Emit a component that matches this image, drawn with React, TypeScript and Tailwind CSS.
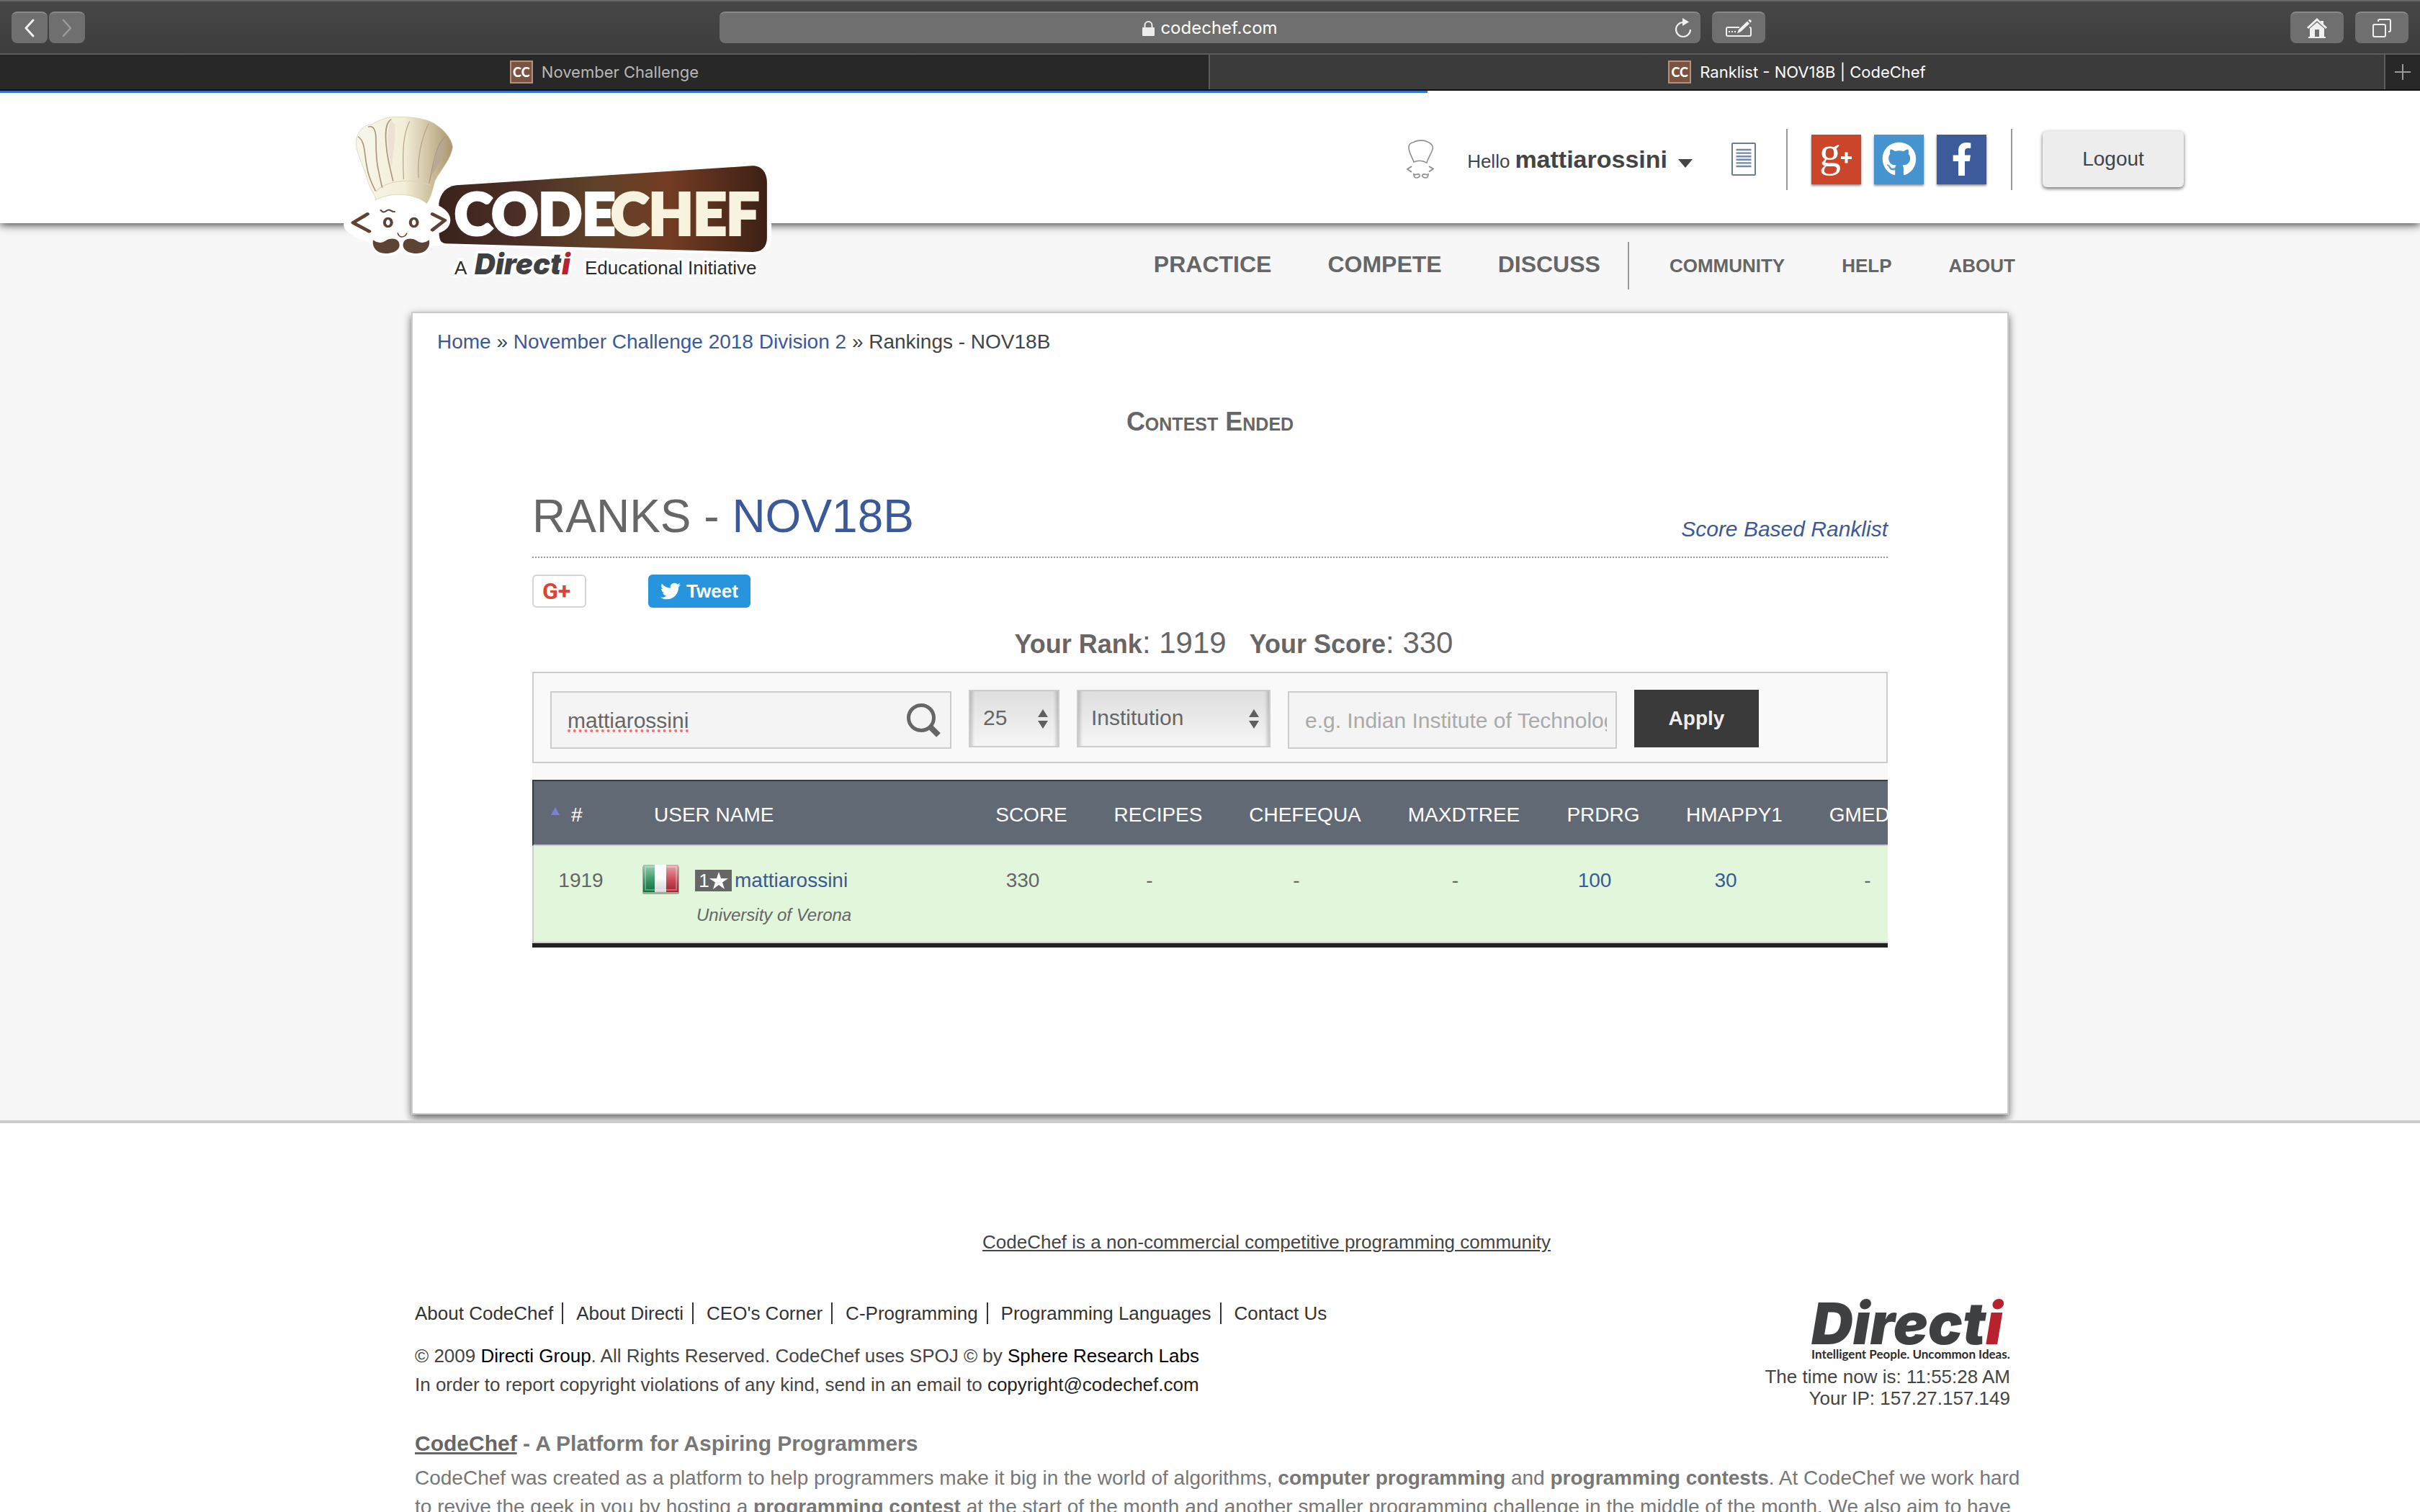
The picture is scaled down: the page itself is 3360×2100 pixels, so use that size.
import React from "react";
import { FaFacebookF, FaGithub, FaTwitter } from "react-icons/fa";

const sans = "font-['Liberation_Sans',Arial,sans-serif]";

function Favicon() {
  return (
    <span className="flex size-8 items-center justify-center border-2 border-[#b5917a] bg-[#7a5440] font-[Lato,sans-serif] text-lg font-black text-white">
      CC
    </span>
  );
}

function ToolButton({ label, wide, children }: { label: string; wide?: boolean; children: React.ReactNode }) {
  return (
    <button
      type="button"
      aria-label={label}
      className={`flex h-11 items-center justify-center rounded-lg border-t-2 border-[#8a8a8a] bg-[#6f6f6f] ${wide ? "w-[74px]" : "w-[50px]"}`}
    >
      {children}
    </button>
  );
}

function BrowserChrome() {
  return (
    <div className="font-[Inter,sans-serif]">
      <div className="grid h-[76px] grid-cols-[1fr_1362px_1fr] items-center gap-4 border-t-2 border-b-2 border-t-[#6a6a6a] border-b-[#5c5c5c] bg-linear-to-b from-[#474747] to-[#3d3d3d] px-4">
        <div className="flex gap-0.5">
          <ToolButton label="Back">
            <svg width="16" height="26" viewBox="0 0 16 26" fill="none" stroke="#f0f0f0" strokeWidth="3" strokeLinecap="round" strokeLinejoin="round">
              <path d="M13 2 3 13l10 11" />
            </svg>
          </ToolButton>
          <ToolButton label="Forward">
            <svg width="16" height="26" viewBox="0 0 16 26" fill="none" stroke="#9c9c9c" strokeWidth="2.5" strokeLinecap="round" strokeLinejoin="round">
              <path d="M3 2l10 11L3 24" />
            </svg>
          </ToolButton>
        </div>
        <div className="flex h-11 items-center rounded-lg border-t-2 border-[#8a8a8a] bg-[#6f6f6f] px-3">
          <span className="flex flex-1 items-center justify-center gap-2 pl-6 text-2xl text-white">
            <svg width="17" height="21" viewBox="0 0 17 21">
              <rect x="0" y="9" width="17" height="12" rx="1" fill="#ececec" />
              <path d="M3.5 9V6a5 5 0 0 1 10 0v3" fill="none" stroke="#ececec" strokeWidth="2" />
            </svg>
            codechef.com
          </span>
          <button type="button" aria-label="Reload">
            <svg width="24" height="28" viewBox="0 0 24 28">
              <path d="M12 6A10 10 0 1 0 22 16" fill="none" stroke="#f0f0f0" strokeWidth="2.2" />
              <path d="M11 0l9 5.500-9 5.500z" fill="#f0f0f0" />
            </svg>
          </button>
        </div>
        <div className="flex gap-4">
          <div className="flex-1">
            <ToolButton label="Edit" wide>
              <svg width="36" height="26" viewBox="0 0 36 26" fill="none" stroke="#f0f0f0" strokeWidth="2">
                <path d="M19 12H3a2 2 0 0 0-2 2v8a2 2 0 0 0 2 2h30a2 2 0 0 0 2-2v-8a2 2 0 0 0-2-2" />
                <path d="M4 18h2M8 18h2M12 18h2" />
                <path d="M16 20.500l2-5.500L30 3.500l3 3.300L21 18z" fill="#f0f0f0" stroke="none" />
                <path d="M31.300 2.500l1.200-1.200q1-.8 2 .2l1 1q.8 1-.2 2L34.200 5.600z" fill="#f0f0f0" stroke="none" />
              </svg>
            </ToolButton>
          </div>
          <ToolButton label="Home" wide>
            <svg width="30" height="28" viewBox="0 0 30 28">
              <path d="M15 0 1 13l2 2L15 4l12 11 2-2-5-4.600V4h-4v1z" fill="#f0f0f0" />
              <path d="M5 14.500 15 6l10 8.500V26h2v2H3v-2h2zM12 16v10h6V16z" fill="#f0f0f0" fillRule="evenodd" />
            </svg>
          </ToolButton>
          <ToolButton label="Show tabs" wide>
            <svg width="26" height="26" viewBox="0 0 26 26" fill="none" stroke="#f0f0f0" strokeWidth="2">
              <rect x="1" y="8" width="17" height="17" rx="2" />
              <path d="M8 4V3a2 2 0 0 1 2-2h13a2 2 0 0 1 2 2v13a2 2 0 0 1-2 2h-1" />
            </svg>
          </ToolButton>
        </div>
      </div>
      <div className="flex h-[50px] border-b-2 border-[#111] bg-[#282828] text-[22px]">
        <a href="#" className="flex w-1/2 items-center justify-center gap-3 border-r-2 border-[#5c5c5c] text-[#b8b8b8]">
          <Favicon />
          November Challenge
        </a>
        <a href="#" className="flex flex-1 items-center justify-center gap-3 bg-[#3b3b3b] text-white">
          <Favicon />
          Ranklist - NOV18B | CodeChef
        </a>
        <button type="button" aria-label="New tab" className="flex w-[50px] items-center justify-center border-l-2 border-[#5c5c5c]">
          <svg width="22" height="22" viewBox="0 0 22 22" stroke="#9a9a9a" strokeWidth="2">
            <path d="M11 0v22M0 11h22" />
          </svg>
        </button>
      </div>
    </div>
  );
}

function CodeChefLogo() {
  return (
    <svg width="640" height="260" viewBox="0 0 640 260" role="img" aria-label="CodeChef">
      <defs>
        <linearGradient id="board" x1="0" x2="1" y1="0" y2="0">
          <stop offset="0" stopColor="#3a231b" />
          <stop offset="0.25" stopColor="#4c2f27" />
          <stop offset="0.48" stopColor="#5f4228" />
          <stop offset="0.7" stopColor="#733c23" />
          <stop offset="1" stopColor="#3d2015" />
        </linearGradient>
        <linearGradient id="hat" x1="0" x2="1" y1="0" y2="0">
          <stop offset="0" stopColor="#f7f6ea" />
          <stop offset="0.5" stopColor="#f3eed8" />
          <stop offset="0.75" stopColor="#d0c3a3" />
          <stop offset="1" stopColor="#a8966e" />
        </linearGradient>
      </defs>
      <g transform="scale(0.40816 0.33333)">
        <path
          d="M148 410C100 440 45 480 42 515c0 40 60 65 98 80 0 40 30 52 55 50 20 0 30-8 43-22 13 15 30 22 52 22 30 0 55-20 55-42l1080 38c40 2 72-20 72-70V330c0-40-20-62-52-70L410 345c-30 10-50 40-56 80l-206-15Z"
          fill="#fff"
        />
        <path d="M425 352 1430 271c35-2 52 30 52 70v230c0 40-20 60-50 59L390 595c-20-1-24-20-24-60V425c6-40 25-68 59-73Z" fill="url(#board)" />
        <path d="M330 432c20-10 75 20 75 65 0 40-40 60-62 58Z" fill="#fff" />
        <path
          d="M150 405c-5-20-25-50-30-90C105 260 84 215 84 170c5-45 25-70 55-72 25-22 60-32 85-31 60 0 110 10 135 35 25 20 50 55 54 90-5 50-40 95-60 140-5 20-10 60-28 96-50-50-130-45-175-14Z"
          fill="url(#hat)"
          stroke="#d9cfb2"
          strokeWidth="2"
        />
        <path d="M152 378c25-40 110-60 180-28l6 4" fill="none" stroke="#ddd3b6" strokeWidth="3" />
        <g fill="none" stroke="#a8967a" strokeWidth="4" strokeLinecap="round">
          <path d="M92 150c25 20 20 80 30 130 5 40 18 70 28 95" />
          <path d="M127 108c20-5 25 20 25 60s0 80 8 120c5 30 8 50 13 72" />
          <path d="M203 78c-20 15-20 60-16 110 3 50 12 90 23 145" />
          <path d="M266 86c-20 50-25 110-20 240" stroke="#b5a586" strokeWidth="3" />
          <path d="M331 96c-25 60-40 150-34 225" stroke="#b5a586" strokeWidth="3" />
          <path d="M385 152c-35 45-40 130-52 190" stroke="#a79679" strokeWidth="3" />
        </g>
        <path d="M203 80c-14 40-16 100 2 200 5-60 14-120 12-180z" fill="#eaddd0" opacity="0.8" />
        <path d="M384 158c-30 40-38 90-42 150 25-40 40-90 42-150z" fill="#b7a693" opacity="0.8" />
        <g fill="none" stroke="#5c4334" strokeWidth="13" strokeLinecap="round" strokeLinejoin="round">
          <path d="M123 472 74 508l55 36" />
          <path d="M344 472l42 26-42 40" />
          <path d="M168 456c14 20 20-8 32 0 6 4 10 8 15 6" strokeWidth="6" />
          <path d="M226 552c6 20 22 20 31 0" strokeWidth="4" />
        </g>
        <ellipse cx="193" cy="507" rx="12" ry="17" fill="#fff" stroke="#5c4334" strokeWidth="10" />
        <ellipse cx="281" cy="507" rx="12" ry="17" fill="#fff" stroke="#5c4334" strokeWidth="10" />
        <path d="M142 580c15 14 30 14 44 2 20-14 46-8 46 20 0 22-24 34-48 34-30 0-46-26-42-56Z" fill="#5c4334" />
        <path d="M333 580c-15 14-30 14-44 2-20-14-45-8-45 20 0 22 23 34 47 34 30 0 46-26 42-56Z" fill="#5c4334" />
      </g>
      <g fontFamily="Lato, sans-serif" fontWeight="900" fontSize="80" strokeWidth="4">
        <text x="171" y="186" fill="#fff" stroke="#fff">CODE</text>
        <text x="388" y="186" fill="#f8f3df" stroke="#f8f3df">CHEF</text>
      </g>
      <g stroke="#fff" strokeWidth="8" paintOrder="stroke" strokeLinejoin="round" fontFamily="Liberation Sans, Arial, sans-serif" fontSize="26" fill="#2b2b2b">
        <text x="171" y="241">A</text>
        <text x="352" y="241">Educational Initiative</text>
        <text x="199" y="241" fontFamily="Inter, sans-serif" fontSize="40" fontWeight="900" fontStyle="italic" fill="#3f4042">
          Direct<tspan fill="#b7222f">i</tspan>
        </text>
      </g>
    </svg>
  );
}

function ChefOutline() {
  return (
    <svg width="38" height="54" viewBox="0 0 38 54" fill="none" stroke="#8f8f8f" strokeWidth="1.600">
      <path d="M10 31C8 25 3 18 3 11c0-5 3-7 7-7.500C14 .5 24 .5 28 2.500c5 2 8 5 8.500 8.500-.5 6-6 12-8.500 21Q19 27 10 31Z" />
      <path d="M7 37l-6 4 6 4M31 37l6 3.500-6 4" strokeWidth="2" />
      <path d="M10 48c3 2 4-1 7 0 3 2 0 5-3 5s-4-2-4-5ZM30 48c-3 2-4-1-7 0-3 2 0 5 3 5s4-2 4-5Z" />
    </svg>
  );
}

function DocIcon() {
  return (
    <svg width="34" height="46" viewBox="0 0 34 46">
      <rect x="1" y="1" width="32" height="44" rx="1" fill="#fff" stroke="#6a7b95" strokeWidth="2" />
      <path d="M6.500 10h21M6.500 14.600h21M6.500 19.200h21M6.500 23.800h21M6.500 28.400h21M6.500 33h21" stroke="#7488a8" strokeWidth="2.400" />
    </svg>
  );
}

function Header() {
  const square = "flex size-[69px] items-center justify-center text-white shadow-[0_2px_3px_rgba(0,0,0,0.45)]";
  return (
    <header className="relative bg-[#fff] shadow-[0_2px_12px_rgba(0,0,0,0.8)]">
      <div className="absolute top-0 left-0 h-[3px] w-[59%] bg-[#2a74e2]" />
      <a href="#" className="absolute top-3.5 left-[460px]">
        <CodeChefLogo />
      </a>
      <div className="flex h-[184px] items-center justify-end pt-1.5 pr-[328px]">
        <ChefOutline />
        <button type="button" className="ml-[46px] flex items-baseline gap-[7px] text-[26px] text-[#444]">
          Hello <b className="text-[34px]">mattiarossini</b>
          <svg width="20" height="12" viewBox="0 0 20 12" className="mb-1 ml-2">
            <path d="M0 0h20L10 12z" fill="#444" />
          </svg>
        </button>
        <a href="#" aria-label="Notices" className="ml-[54px]">
          <DocIcon />
        </a>
        <div className="ml-[42px] flex h-[85px] items-center gap-[18px] border-x-2 border-[#999] pr-[34px] pl-[33px]">
          <a href="#" aria-label="Google Plus" className={`${square} bg-[#ca4529]`}>
            <svg width="69" height="69" viewBox="0 0 69 69">
              <text x="11" y="44" fontFamily="Liberation Serif, serif" fontSize="60" fill="#fff">g</text>
              <path d="M41 32h15M48.500 24.500v15" stroke="#fff" strokeWidth="4" />
            </svg>
          </a>
          <a href="#" aria-label="GitHub" className={`${square} bg-[#4593cf]`}>
            <FaGithub size={48} />
          </a>
          <a href="#" aria-label="Facebook" className={`${square} bg-[#3d5b9b]`}>
            <FaFacebookF size={46} />
          </a>
        </div>
        <button type="button" className="ml-[42px] h-[78px] w-[196px] rounded-md bg-[#ededed] text-[28px] text-[#444] shadow-[0_2px_5px_rgba(0,0,0,0.6)]">
          Logout
        </button>
      </div>
    </header>
  );
}

function MainNav() {
  return (
    <nav className="flex items-baseline justify-end pt-[26px] pr-[562px] pb-[31px] font-bold text-[#666]">
      <div className="flex gap-[78px] border-r-2 border-[#999] pt-[13px] pr-[38px] pb-[17px] text-[32px] leading-9">
        {["PRACTICE", "COMPETE", "DISCUSS"].map((t) => (
          <a key={t} href="#">{t}</a>
        ))}
      </div>
      <div className="flex gap-[79px] pl-14 text-[26px] leading-9">
        {["COMMUNITY", "HELP", "ABOUT"].map((t) => (
          <a key={t} href="#">{t}</a>
        ))}
      </div>
    </nav>
  );
}

function Select({ label, width, options }: { label: string; width: string; options: string[] }) {
  return (
    <div className={`relative h-20 ${width}`}>
      <select
        aria-label={label}
        className="size-full appearance-none border-2 border-[#ccc] bg-linear-to-b from-[#dedede] to-[#f6f6f6] pb-1 pl-[18px] text-[30px] text-[#666] shadow-[inset_6px_0_4px_-3px_rgba(0,0,0,0.18),inset_-6px_0_4px_-3px_rgba(0,0,0,0.18)]"
      >
        {options.map((o) => (
          <option key={o}>{o}</option>
        ))}
      </select>
      <svg width="14" height="27" viewBox="0 0 14 27" className="pointer-events-none absolute top-[27px] right-4">
        <path d="M7 0l7 11H0zM7 27l7-11H0z" fill="#5f5f5f" />
      </svg>
    </div>
  );
}

function Filters() {
  const field = "mt-0.5 flex h-20 items-center border-2 border-[#ccc] bg-[#f4f4f4] pl-[22px] text-[30px] text-[#666]";
  return (
    <form className="mt-4 flex gap-6 border-2 border-[#ccc] bg-[#f9f9f9] px-[23px] pt-[23px] pb-[18px]">
      <div className={`${field} w-[557px] pr-3`}>
        <input
          aria-label="User name"
          defaultValue="mattiarossini"
          className="min-w-0 flex-1 bg-transparent underline decoration-[#ff6b6b] decoration-dotted decoration-4 underline-offset-[3px] outline-none"
        />
        <button type="button" aria-label="Search">
          <svg width="48" height="48" viewBox="0 0 48 48" fill="none" stroke="#666">
            <circle cx="20" cy="21" r="17.500" strokeWidth="5" />
            <path d="M33 34l11 11" strokeWidth="8" />
          </svg>
        </button>
      </div>
      <Select label="Rows per page" width="w-[126px]" options={["25", "50", "100"]} />
      <Select label="Filter by" width="w-[269px]" options={["Institution", "Country"]} />
      <div className={`${field} w-[457px] pr-3`}>
        <input
          aria-label="Institution"
          placeholder="e.g. Indian Institute of Technology"
          className="min-w-0 flex-1 bg-transparent outline-none placeholder:text-[#aaa]"
        />
      </div>
      <button type="button" className="h-20 w-[173px] bg-[#3a3a3a] text-[28px] font-bold text-[#eee]">
        Apply
      </button>
    </form>
  );
}

const problems: { name: string; value: string; link?: boolean; col: string }[] = [
  { name: "SCORE", value: "330", col: "w-[164px]" },
  { name: "RECIPES", value: "-", col: "w-[188px]" },
  { name: "CHEFEQUA", value: "-", col: "w-[220px]" },
  { name: "MAXDTREE", value: "-", col: "w-[221px]" },
  { name: "PRDRG", value: "100", link: true, col: "w-[166px]" },
  { name: "HMAPPY1", value: "30", link: true, col: "w-[198px]" },
  { name: "GMEDIAN", value: "-", col: "w-[196px]" },
];

function ItalianFlag() {
  return (
    <svg width="52" height="42" viewBox="0 0 52 42" role="img" aria-label="Italy">
      <defs>
        <linearGradient id="gloss" x1="0" x2="0" y1="0" y2="1">
          <stop offset="0" stopColor="#fff" stopOpacity="0.6" />
          <stop offset="0.5" stopColor="#fff" stopOpacity="0.2" />
          <stop offset="1" stopColor="#000" stopOpacity="0.15" />
        </linearGradient>
      </defs>
      <rect x="1" y="3" width="51" height="39" rx="2" fill="#000" opacity="0.3" />
      <rect x="2" y="1" width="17" height="38" fill="#13864b" />
      <rect x="18" y="1" width="17" height="38" fill="#fbfbfb" />
      <rect x="34" y="1" width="17" height="38" fill="#c22a3a" />
      <rect x="2" y="1" width="49" height="38" fill="url(#gloss)" />
      <rect x="5" y="4" width="43" height="32" fill="none" stroke="#fff" strokeOpacity="0.3" strokeWidth="2" />
    </svg>
  );
}

function RankTable() {
  return (
    <div className="overflow-hidden border-b-6 border-[#222] bg-[#f9f9f9] pt-[23px]">
      <table className="w-[1952px] table-fixed border-separate border-spacing-0 text-[28px] leading-8 text-[#666]">
        <thead>
          <tr className="h-[92px] bg-[#616a74] text-white">
            <th className="w-[133px] border-t-2 border-b-2 border-l-2 border-t-[#3b3b3b] border-b-[#ccc] border-l-[#3b3b3b] pt-1.5 font-normal">
              <div className="flex items-center gap-4 pl-6">
                <svg width="12" height="11" viewBox="0 0 12 11" className="mb-3">
                  <path d="M6 0l6 11H0z" fill="#7b7fd6" />
                </svg>
                #
              </div>
            </th>
            <th className="w-[466px] border-t-2 border-b-2 border-t-[#3b3b3b] border-b-[#ccc] pt-1.5 pl-9 text-left font-normal">USER NAME</th>
            {problems.map((p) => (
              <th key={p.name} className={`${p.col} border-t-2 border-b-2 border-t-[#3b3b3b] border-b-[#ccc] pt-1.5 pl-6 font-normal`}>
                {p.name}
              </th>
            ))}
          </tr>
        </thead>
        <tbody>
          <tr className="h-[135px] bg-[#e1f6da] text-center align-top">
            <td className="border-b-2 border-l-2 border-[#ccc] pt-8">1919</td>
            <td className="border-b-2 border-[#ccc] pt-[25px] pl-[19px] text-left">
              <div className="flex">
                <ItalianFlag />
                <div className="ml-[22px] pt-[7px]">
                  <div className="flex items-center gap-1">
                    <span className="flex h-[30px] w-[51px] items-center justify-center bg-[#666] text-[26px] text-white">
                      1
                      <svg width="26" height="24" viewBox="0 0 26 24">
                        <path d="M13 0l3 9h10l-8 5.500 3 9.500-8-6-8 6 3-9.500L0 9h10z" fill="#fff" />
                      </svg>
                    </span>
                    <a href="#" className="text-[#3b5998]">mattiarossini</a>
                  </div>
                  <div className="mt-4 pl-0.5 text-2xl italic">University of Verona</div>
                </div>
              </div>
            </td>
            {problems.map((p) => (
              <td key={p.name} className="border-b-2 border-[#ccc] pt-8">
                {p.link ? <a href="#" className="text-[#3b5998]">{p.value}</a> : p.value}
              </td>
            ))}
          </tr>
        </tbody>
      </table>
    </div>
  );
}

function Footer() {
  const links = ["About CodeChef", "About Directi", "CEO's Corner", "C-Programming", "Programming Languages", "Contact Us"];
  return (
    <footer className="border-t-4 border-[#ccc] pt-[147px] text-[26px] text-[#444]">
      <div className="mx-auto w-full max-w-[2260px] pl-[26px]">
        <div className="pl-[131px] text-center leading-9">
          <a href="#" className="underline">CodeChef is a non-commercial competitive programming community</a>
        </div>
        <div className="mt-[66px] flex items-start justify-between">
          <div>
            <ul className="flex text-[#333]">
              {links.map((l, i) => (
                <li key={l} className="flex">
                  <a href="#" className="leading-[30px]">{l}</a>
                  {i < links.length - 1 && <span className="mr-[18px] ml-3 h-[30px] w-0.5 bg-[#333]" />}
                </li>
              ))}
            </ul>
            <p className="mt-6 leading-10">
              © 2009 <a href="#" className="text-black">Directi Group</a>. All Rights Reserved. CodeChef uses SPOJ © by{" "}
              <a href="#" className="text-black">Sphere Research Labs</a>
            </p>
            <p className="leading-10">
              In order to report copyright violations of any kind, send in an email to{" "}
              <a href="#" className="text-[#222]">copyright@codechef.com</a>
            </p>
          </div>
          <div className="flex flex-col items-end pr-[19px]">
            <svg width="276" height="88" viewBox="0 0 276 88" role="img" aria-label="Directi" className="overflow-visible">
              <text x="0" y="58" fontFamily="Inter, sans-serif" fontSize="80" fontWeight="900" fontStyle="italic" fill="#3f4042">
                Direct<tspan fill="#b7222f">i</tspan>
              </text>
              <text x="0" y="78" fontFamily="Lato, sans-serif" fontSize="17" fontWeight="700" fill="#2b2b2b">
                Intelligent People. Uncommon Ideas.
              </text>
            </svg>
            <p className="text-right leading-[30px]">
              The time now is: 11:55:28 AM
              <br />
              Your IP: 157.27.157.149
            </p>
          </div>
        </div>
        <section className="mt-7 text-[#777]">
          <h2 className="text-[30px] leading-10 font-bold">
            <a href="#" className="text-[#666] underline">CodeChef</a> - A Platform for Aspiring Programmers
          </h2>
          <p className="mt-2 text-[28px] leading-10">
            CodeChef was created as a platform to help programmers make it big in the world of algorithms, <b>computer programming</b> and{" "}
            <b>programming contests</b>. At CodeChef we work hard to revive the geek in you by hosting a <b>programming contest</b> at the
            start of the month and another smaller programming challenge in the middle of the month. We also aim to have
          </p>
        </section>
      </div>
    </footer>
  );
}

export default function App() {
  return (
    <div className={`h-screen overflow-hidden bg-white ${sans}`}>
      <BrowserChrome />
      <div className="overflow-hidden bg-[#f7f7f7] pb-2">
        <Header />
        <MainNav />
        <main className="mx-auto w-full max-w-[2218px] border-2 border-[#ccc] bg-white pt-6 pb-[230px] shadow-[0_5px_11px_rgba(0,0,0,0.6)]">
          <p className="px-[34px] text-[28px] leading-8 text-[#444]">
            <a href="#" className="text-[#3b5998]">Home</a> »{" "}
            <a href="#" className="text-[#3b5998]">November Challenge 2018 Division 2</a> » Rankings - NOV18B
          </p>
          <div className="mt-[75px] text-center text-4xl leading-10 font-bold text-[#666] [font-variant:small-caps]">Contest Ended</div>
          <div className="mx-[166px] mt-[75px]">
            <div className="flex items-end justify-between border-b-2 border-dotted border-[#999] pb-5">
              <h1 className="text-[64px] leading-[72px] text-[#666]">
                RANKS - <a href="#" className="text-[#3b5998]">NOV18B</a>
              </h1>
              <a href="#" className="text-[30px] leading-9 text-[#3b5998] italic">Score Based Ranklist</a>
            </div>
            <div className="mt-[23px] flex gap-[86px]">
              <button
                type="button"
                aria-label="Share on Google Plus"
                className="flex h-[46px] w-[75px] items-center rounded-md border-2 border-[#d4d4d4] bg-white pl-3 font-[Roboto,sans-serif] text-[32px] font-bold text-[#db4437]"
              >
                G+
              </button>
              <button type="button" className="flex h-[46px] w-[142px] items-center justify-center gap-2 rounded-md bg-[#2795de] text-[26px] font-bold text-white">
                <FaTwitter size={28} />
                Tweet
              </button>
            </div>
            <div className="mt-[25px] flex justify-center gap-8 pl-[66px] text-[42px] leading-[48px] text-[#666]">
              <p><b className="text-4xl">Your Rank</b>: 1919</p>
              <p><b className="text-4xl">Your Score</b>: 330</p>
            </div>
            <Filters />
            <RankTable />
          </div>
        </main>
      </div>
      <Footer />
    </div>
  );
}
